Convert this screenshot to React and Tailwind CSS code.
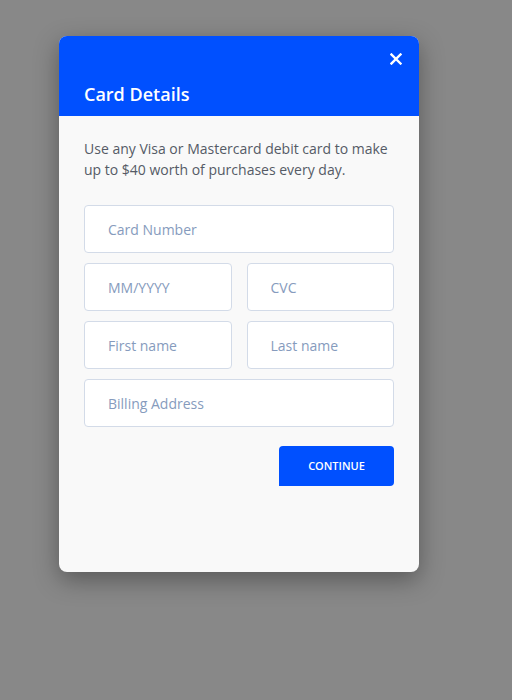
import React from "react";

const font = { fontFamily: '"Open Sans", "Noto Sans", sans-serif' };

function Field({ placeholder, className = "" }) {
  return (
    <input
      placeholder={placeholder}
      className={
        "h-[48px] rounded-[4px] border border-[#d3dbe8] bg-white pl-[23px] text-[14px] text-[#333] outline-none placeholder:text-[#869bbd] " +
        className
      }
      style={font}
    />
  );
}

export default function App() {
  return (
    <div className="min-h-[700px] w-full bg-[#888888] pt-[36px] pl-[59px]" style={font}>
      <div className="flex h-[536px] w-[360px] flex-col overflow-hidden rounded-[8px] bg-[#f9f9f9] shadow-[0_8px_24px_rgba(0,0,0,0.35)]">
        <div className="flex h-[80px] flex-col bg-[#0050ff] pl-[25px] pr-[17px] pt-[17px]">
          <div className="flex justify-end">
            <svg width="12" height="12" viewBox="0 0 12 12">
              <path d="M1.5 1.5 L10.5 10.5 M10.5 1.5 L1.5 10.5" stroke="white" strokeWidth="2.4" strokeLinecap="square" />
            </svg>
          </div>
          <div className="mt-[16px] text-[18px] font-semibold leading-[27px] text-white">Card Details</div>
        </div>
        <div className="flex flex-col px-[25px] pt-[22px]">
          <p className="text-[14px] leading-[21px] text-[#555b66]">
            Use any Visa or Mastercard debit card to make up to $40 worth of purchases every day.
          </p>
          <div className="mt-[25px] flex flex-col gap-[10px]">
            <Field placeholder="Card Number" className="w-full" />
            <div className="grid grid-cols-2 gap-[15px]">
              <Field placeholder="MM/YYYY" className="w-full" />
              <Field placeholder="CVC" className="w-full" />
            </div>
            <div className="grid grid-cols-2 gap-[15px]">
              <Field placeholder="First name" className="w-full" />
              <Field placeholder="Last name" className="w-full" />
            </div>
            <Field placeholder="Billing Address" className="w-full" />
          </div>
          <div className="mt-[19px] flex justify-end">
            <button className="h-[40px] w-[115px] rounded-[4px] rounded-bl-none bg-[#0050ff] text-[11px] font-semibold text-white">
              CONTINUE
            </button>
          </div>
        </div>
      </div>
    </div>
  );
}
